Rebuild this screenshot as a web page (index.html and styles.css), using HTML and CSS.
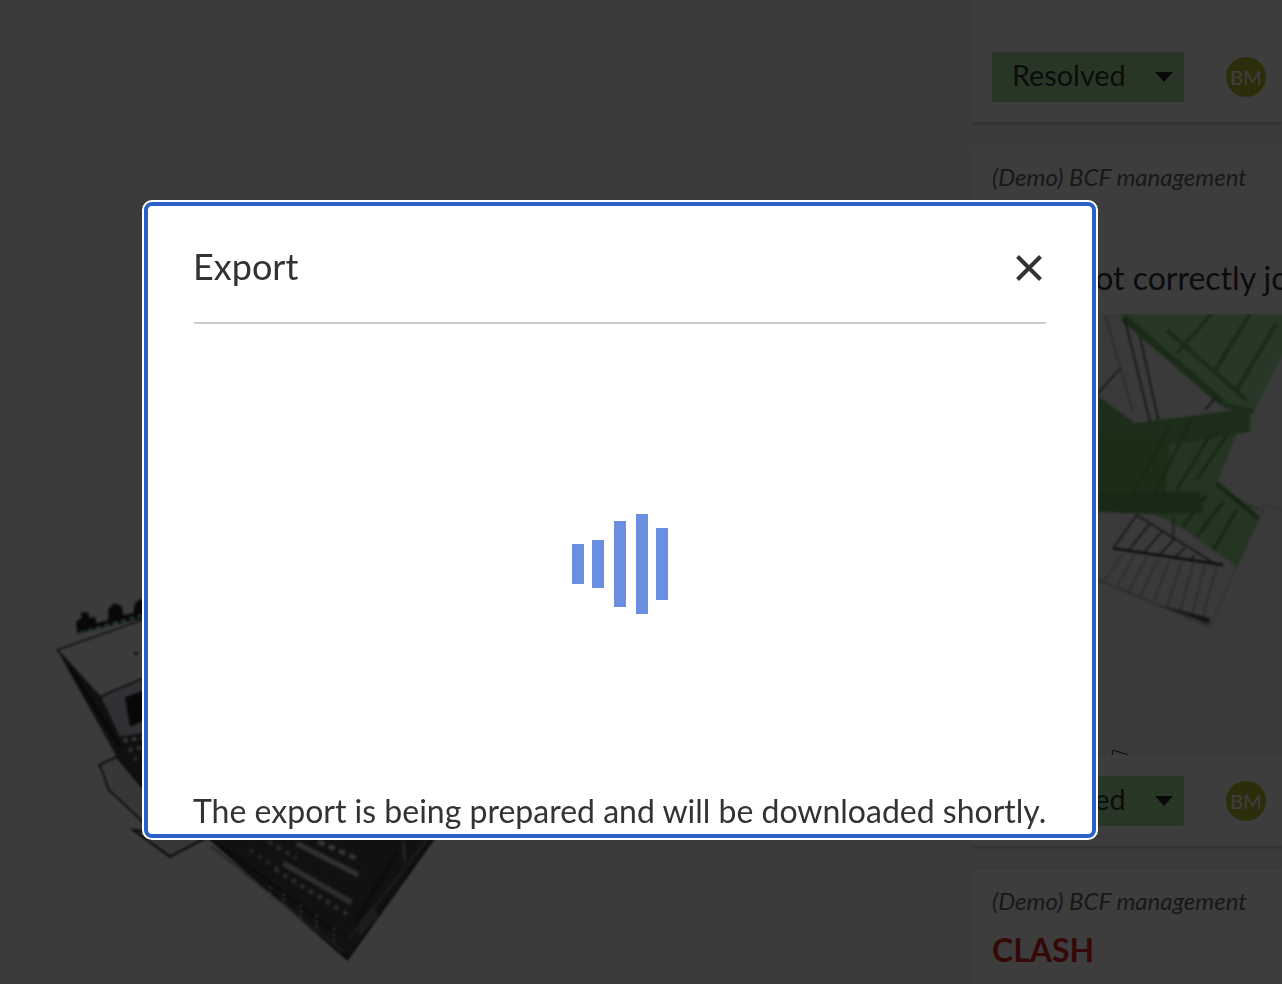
FILE: index.html
```html
<!DOCTYPE html>
<html>
<head>
    <title>Export</title>
    <link rel="stylesheet" href="styles.css">
</head>
<body>

<div class="page">
    <div class="viewer">
        <svg class="model" width="972" height="984" viewBox="0 0 972 984">
            <!-- upper part of the building, left of the dialog -->
            <g class="soft" transform="translate(40,590) scale(.3333)">
                <path d="M112 130 L108 95 L125 85 L122 68 L142 66 L150 85 L165 80 L170 100 L205 90 L205 58 L222 40 L245 48 L250 75 L280 70 L285 40 L300 28 L330 25 L330 80 Z" fill="#222"/>
                <line x1="118" y1="130" x2="320" y2="72" stroke="#8fe8c0" stroke-width="9" stroke-dasharray="16 10"/>
                <polygon points="52,180 330,82 330,255 180,320" fill="#f4f4f4" stroke="#222" stroke-width="4"/>
                <circle cx="288" cy="190" r="5" fill="#333"/>
                <polygon points="52,180 180,320 330,255 330,640 230,500" fill="#444"/>
                <line x1="90" y1="235" x2="240" y2="470" stroke="#111" stroke-width="14" stroke-dasharray="6 5"/>
                <polygon points="184,322 330,258 330,425 240,440" fill="#c8ccd8"/>
                <polygon points="255,322 330,295 330,385 270,410" fill="#222"/>
                <line x1="250" y1="452" x2="330" y2="440" stroke="#ddd" stroke-width="12" stroke-dasharray="14 12"/>
                <line x1="265" y1="480" x2="330" y2="468" stroke="#bbb" stroke-width="12" stroke-dasharray="14 12"/>
                <line x1="280" y1="508" x2="330" y2="498" stroke="#999" stroke-width="12" stroke-dasharray="14 12"/>
                <polygon points="178,525 230,500 330,620 330,715 205,598 190,552" fill="#efe4e0" stroke="#222" stroke-width="5"/>
            </g>
            <!-- lower part of the building, under the dialog -->
            <g class="soft" transform="translate(140,830) scale(.3333)">
                <polygon points="-20,0 90,80 195,25" fill="#efe4e0" stroke="#222" stroke-width="6"/>
                <polygon points="180,0 900,0 622,388" fill="#4a4a4a" stroke="#222" stroke-width="6"/>
                <line x1="470" y1="40" x2="655" y2="135" stroke="#c8c8c8" stroke-width="16"/>
                <line x1="430" y1="100" x2="635" y2="218" stroke="#c0c0c0" stroke-width="16"/>
                <line x1="535" y1="35" x2="655" y2="88" stroke="#ddd" stroke-width="14" stroke-dasharray="20 14"/>
                <line x1="385" y1="35" x2="470" y2="85" stroke="#aaa" stroke-width="12" stroke-dasharray="14 16"/>
                <line x1="330" y1="60" x2="425" y2="125" stroke="#999" stroke-width="12" stroke-dasharray="12 18"/>
                <line x1="405" y1="118" x2="625" y2="255" stroke="#bbb" stroke-width="12" stroke-dasharray="14 16"/>
                <line x1="250" y1="50" x2="590" y2="310" stroke="#222" stroke-width="12" stroke-dasharray="8 6"/>
                <line x1="215" y1="50" x2="610" y2="365" stroke="#888" stroke-width="5"/>
                <g stroke="#ccc" stroke-width="7" stroke-dasharray="7 9">
                    <line x1="390" y1="170" x2="390" y2="210"/>
                    <line x1="432" y1="190" x2="432" y2="240"/>
                    <line x1="482" y1="225" x2="482" y2="275"/>
                    <line x1="530" y1="255" x2="530" y2="305"/>
                    <line x1="582" y1="295" x2="582" y2="345"/>
                </g>
                <line x1="625" y1="330" x2="860" y2="30" stroke="#888" stroke-width="5"/>
                <line x1="650" y1="270" x2="770" y2="70" stroke="#222" stroke-width="14" stroke-dasharray="8 6"/>
                <line x1="790" y1="35" x2="795" y2="95" stroke="#c99" stroke-width="6"/>
                <polygon points="650,290 700,225 715,260 660,320" fill="#777"/>
            </g>
        </svg>
    </div>

    <div class="side">
        <div class="card card-cut">
            <div class="card-foot">
                <div class="status"><span class="status-text">Resolved</span><span class="caret"></span></div>
                <div class="avatar">BM</div>
            </div>
        </div>

        <div class="card">
            <div class="project">(Demo) BCF management</div>
            <div class="title">Stairs not correctly joined</div>
            <svg class="shot" width="310" height="441" viewBox="0 0 310 441">
                <g class="soft" transform="translate(118,-4) scale(.3333)">
                    <polygon points="85,12 600,12 600,90 490,310 400,280 300,190" fill="#a8eaa4"/>
                    <g stroke="#6cb864" fill="none">
                        <line x1="100" y1="22" x2="400" y2="280" stroke-width="22"/>
                        <line x1="365" y1="12" x2="260" y2="130" stroke-width="12"/>
                        <line x1="480" y1="12" x2="370" y2="190" stroke-width="14"/>
                        <line x1="560" y1="40" x2="440" y2="240" stroke-width="14"/>
                        <line x1="230" y1="60" x2="470" y2="270" stroke-width="14"/>
                        <line x1="400" y1="285" x2="490" y2="305" stroke-width="16"/>
                    </g>
                    <polygon points="24,258 135,340 480,295 480,365 440,372 380,520 505,625 440,770 270,650 190,612 24,605" fill="#98dc90"/>
                    <polygon points="135,340 480,295 480,365 300,395 24,420 24,258" fill="#74c068"/>
                    <polygon points="24,370 240,390 220,610 24,605" fill="#70bc62"/>
                    <polygon points="24,545 330,545 340,610 190,612 24,605" fill="#66ae58"/>
                    <g stroke="#5ca850" fill="none">
                        <line x1="240" y1="345" x2="130" y2="550" stroke-width="8"/>
                        <line x1="300" y1="335" x2="190" y2="560" stroke-width="8"/>
                        <line x1="360" y1="375" x2="260" y2="540" stroke-width="8"/>
                        <line x1="415" y1="370" x2="320" y2="510" stroke-width="8"/>
                        <line x1="350" y1="555" x2="280" y2="650" stroke-width="10"/>
                        <line x1="400" y1="575" x2="320" y2="680" stroke-width="10"/>
                        <line x1="440" y1="600" x2="370" y2="720" stroke-width="10"/>
                        <line x1="380" y1="520" x2="505" y2="625" stroke-width="14"/>
                    </g>
                    <g stroke="#333" fill="none" stroke-width="4">
                        <line x1="105" y1="30" x2="180" y2="335"/>
                        <line x1="150" y1="80" x2="205" y2="330"/>
                        <line x1="24" y1="250" x2="90" y2="175"/>
                        <line x1="345" y1="300" x2="380" y2="258"/>
                        <line x1="140" y1="615" x2="70" y2="715"/>
                        <line x1="140" y1="615" x2="365" y2="755"/>
                        <line x1="70" y1="715" x2="400" y2="765" stroke-width="7"/>
                        <line x1="180" y1="640" x2="115" y2="722"/>
                        <line x1="215" y1="665" x2="160" y2="730"/>
                        <line x1="250" y1="690" x2="205" y2="738"/>
                        <line x1="285" y1="715" x2="250" y2="745"/>
                        <line x1="315" y1="735" x2="300" y2="752"/>
                        <line x1="250" y1="620" x2="250" y2="690" stroke-width="3"/>
                    </g>
                    <g stroke="#555" fill="none" stroke-width="2">
                        <line x1="45" y1="12" x2="130" y2="310"/>
                        <line x1="25" y1="810" x2="360" y2="950"/>
                        <line x1="100" y1="730" x2="40" y2="815"/>
                        <line x1="135" y1="735" x2="80" y2="830"/>
                        <line x1="170" y1="740" x2="115" y2="845"/>
                        <line x1="205" y1="745" x2="150" y2="860"/>
                        <line x1="240" y1="750" x2="190" y2="875"/>
                        <line x1="275" y1="755" x2="230" y2="890"/>
                        <line x1="310" y1="760" x2="270" y2="905"/>
                        <line x1="345" y1="765" x2="305" y2="920"/>
                        <line x1="380" y1="770" x2="335" y2="935"/>
                        <line x1="525" y1="585" x2="600" y2="606" stroke-dasharray="5 3"/>
                        <line x1="525" y1="585" x2="435" y2="780" stroke-dasharray="5 3"/>
                        <line x1="435" y1="780" x2="360" y2="950" stroke-dasharray="5 3"/>
                        <line x1="440" y1="572" x2="510" y2="600" stroke-dasharray="5 3" stroke-width="4"/>
                    </g>
                    <polygon points="210,885 360,925 358,942" fill="#555"/>
                </g>
                <polyline points="140,441 141,436 156,441" fill="none" stroke="#222" stroke-width="1"/>
            </svg>
            <div class="card-foot">
                <div class="status"><span class="status-text">Resolved</span><span class="caret"></span></div>
                <div class="avatar">BM</div>
            </div>
        </div>

        <div class="card card-last">
            <div class="project">(Demo) BCF management</div>
            <div class="kind">CLASH</div>
        </div>
    </div>
</div>

<div class="overlay"></div>

<div class="dialog">
    <div class="dialog-head">
        <span class="dialog-title">Export</span>
        <svg class="close" width="26" height="26" viewBox="0 0 26 26">
            <path d="M1.5 1.5 L24.5 24.5 M24.5 1.5 L1.5 24.5" fill="none" stroke="#333" stroke-width="4"/>
        </svg>
    </div>
    <div class="dialog-body">
        <div class="loader">
            <span class="bar bar-1"></span>
            <span class="bar bar-2"></span>
            <span class="bar bar-3"></span>
            <span class="bar bar-4"></span>
            <span class="bar bar-5"></span>
        </div>
    </div>
    <div class="dialog-text">The export is being prepared and will be downloaded shortly.</div>
</div>

</body>
</html>
```

FILE: styles.css
```css
html, body {
    margin: 0;
    height: 984px;
    overflow: hidden;
    background: #f4f4f4;
    font-family: "Lato", "Liberation Sans", sans-serif;
    color: #333;
}

.page {
    display: flex;
    height: 984px;
}

.viewer {
    width: 972px;
    flex: none;
}
.model {
    display: block;
}
/* the model pictures are scaled by a third, so this is about 1px on screen */
.soft {
    filter: blur(2.4px);
}

/* list of topics on the right */
.side {
    flex: 1;
    display: flex;
    flex-direction: column;
    gap: 23px;
    overflow: hidden;
}
.card {
    flex: none;
    background: #fff;
    box-shadow: 0 2px 5px rgba(0, 0, 0, .2);
    border-radius: 4px 0 0 4px;
}
.card-cut {
    height: 122px;
    display: flex;
    flex-direction: column;
    justify-content: flex-end;
    border-radius: 0 0 0 4px;
}
.card-last {
    height: 160px;
}
.project {
    padding: 16px 20px 0;
    font-size: 24px;
    line-height: 32px;
    font-style: italic;
    color: #666;
    white-space: nowrap;
}
.title {
    margin-top: 65px;
    padding-left: 20px;
    font-size: 32px;
    line-height: 40px;
    color: #333;
    white-space: nowrap;
    overflow: hidden;
}
.shot {
    display: block;
    margin-top: 16px;
    background: #f0f0f0;
}
.kind {
    padding: 12px 20px 0;
    font-size: 32px;
    line-height: 42px;
    font-weight: 700;
    color: #d8281c;
}
.card-foot {
    display: flex;
    align-items: center;
    padding: 21px 16px 20px 20px;
    justify-content: space-between;
}
.status {
    width: 172px;
    height: 50px;
    padding-left: 20px;
    display: flex;
    align-items: center;
    justify-content: space-between;
    background: #a8e69c;
    border-radius: 3px;
    font-size: 28.8px;
    color: #333;
}
.status-text {
    padding-bottom: 5px;
}
.caret {
    margin-right: 11px;
    border-left: 9px solid transparent;
    border-right: 9px solid transparent;
    border-top: 10px solid #222;
}
.avatar {
    width: 40px;
    height: 40px;
    border-radius: 50%;
    display: flex;
    align-items: center;
    justify-content: center;
    background: #b8c030;
    font-size: 20px;
    color: #fff;
}

.overlay {
    position: fixed;
    top: 0;
    left: 0;
    right: 0;
    bottom: 0;
    background: rgba(0, 0, 0, .76);
}

/* export dialog */
.dialog {
    position: fixed;
    left: 144px;
    top: 202px;
    width: 952px;
    height: 636px;
    box-sizing: border-box;
    display: flex;
    flex-direction: column;
    padding: 0 46px;
    background: #fff;
    border: 4px solid #2a5fc8;
    border-radius: 8px;
    box-shadow: 0 0 0 2px #fff;
}
.dialog-head {
    height: 112px;
    flex: none;
    display: flex;
    align-items: center;
    justify-content: space-between;
    padding: 4px 4px 0 0;
    border-bottom: 2px solid #ccc;
}
.dialog-title {
    margin-left: -1px;
    font-size: 36px;
    color: #333;
}
.close {
    display: block;
    margin-top: 4px;
}
.dialog-body {
    flex: 1;
    display: flex;
    align-items: center;
    justify-content: center;
    padding-top: 14px;
}
.loader {
    display: flex;
    align-items: center;
}
.bar {
    display: block;
    width: 12px;
    background: #6a8fe0;
}
.bar-1 { height: 40px; }
.bar-2 { height: 48px; margin-left: 8px; }
.bar-3 { height: 86px; margin-left: 10px; }
.bar-4 { height: 100px; margin-left: 10px; }
.bar-5 { height: 72px; margin-left: 8px; }
.dialog-text {
    flex: none;
    height: 44px;
    margin-left: -1px;
    line-height: 42px;
    font-size: 32px;
    color: #333;
    white-space: nowrap;
}
```
